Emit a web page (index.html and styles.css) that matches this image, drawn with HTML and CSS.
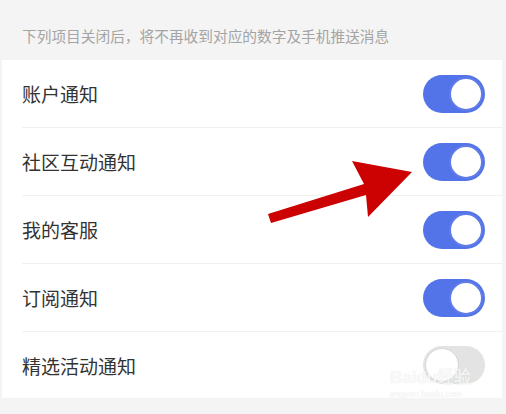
FILE: index.html
```html
<!DOCTYPE html>
<html lang="zh-CN">
<head>
    <meta charset="UTF-8">
    <meta name="viewport" content="width=device-width, initial-scale=1.0">
    <title>消息通知</title>
    <link rel="stylesheet" href="styles.css">
</head>
<body>
    <p class="tip">下列项目关闭后，将不再收到对应的数字及手机推送消息</p>

    <ul class="list">
        <li class="row"><span>账户通知</span><i class="switch on"></i></li>
        <li class="row"><span>社区互动通知</span><i class="switch on"></i></li>
        <li class="row"><span>我的客服</span><i class="switch on"></i></li>
        <li class="row"><span>订阅通知</span><i class="switch on"></i></li>
        <li class="row"><span>精选活动通知</span><i class="switch"></i></li>
    </ul>

    <svg class="arrow" width="506" height="414" viewBox="0 0 506 414">
        <polygon points="268,214 364,184 352,161 412,172 368,217 366,195 271,223" fill="#cc0202"/>
    </svg>

    <div class="mark">
        <b>Bai<em>du</em>经验</b>
        <small>jingyan.baidu.com</small>
    </div>
</body>
</html>
```

FILE: styles.css
```css
html, body {
    margin: 0;
    padding: 0;
}
body {
    width: 506px;
    height: 414px;
    background: #f4f4f4;
    font-family: "Noto Sans CJK SC", "Noto Sans", sans-serif;
    position: relative;
    overflow: hidden;
}
.tip {
    margin: 0;
    height: 60px;
    box-sizing: border-box;
    padding: 26px 0 0 22px;
    font-size: 14.7px;
    line-height: 20px;
    color: #a4a4a4;
    white-space: nowrap;
}
.list {
    list-style: none;
    margin: 0 4px 0 2px;
    padding: 0 0 0 20px;
    background: #fff;
}
.row {
    height: 67px;
    display: flex;
    align-items: center;
    justify-content: space-between;
    padding-right: 17px;
    border-bottom: 1px solid #f0f0f0;
    font-size: 19px;
    color: #333;
}
.row:last-child {
    border-bottom: 0;
    height: 66px;
}
.switch {
    width: 62px;
    height: 38px;
    border-radius: 19px;
    background: #e3e3e3;
    position: relative;
    box-sizing: border-box;
}
.switch:after {
    content: '';
    position: absolute;
    top: 2px;
    left: 2px;
    width: 34px;
    height: 34px;
    border-radius: 50%;
    background: #fff;
    box-sizing: border-box;
    border: 1px solid #d6d6d6;
}
.switch.on {
    background: #5373e9;
}
.switch.on:after {
    left: 26px;
    border: 2px solid #5f7ce8;
}
.arrow {
    position: absolute;
    left: 0;
    top: 0;
}
.mark {
    position: absolute;
    left: 390px;
    top: 368px;
    color: rgba(255, 255, 255, 0.8);
    text-shadow: 0 0 1px rgba(0, 0, 0, 0.12);
    font-family: "Liberation Sans", sans-serif;
    display: flex;
    flex-direction: column;
}
.mark b {
    font-size: 17px;
    font-weight: bold;
    line-height: 20px;
}
.mark em {
    font-style: normal;
}
.mark small {
    font-size: 9px;
    line-height: 12px;
}
```
